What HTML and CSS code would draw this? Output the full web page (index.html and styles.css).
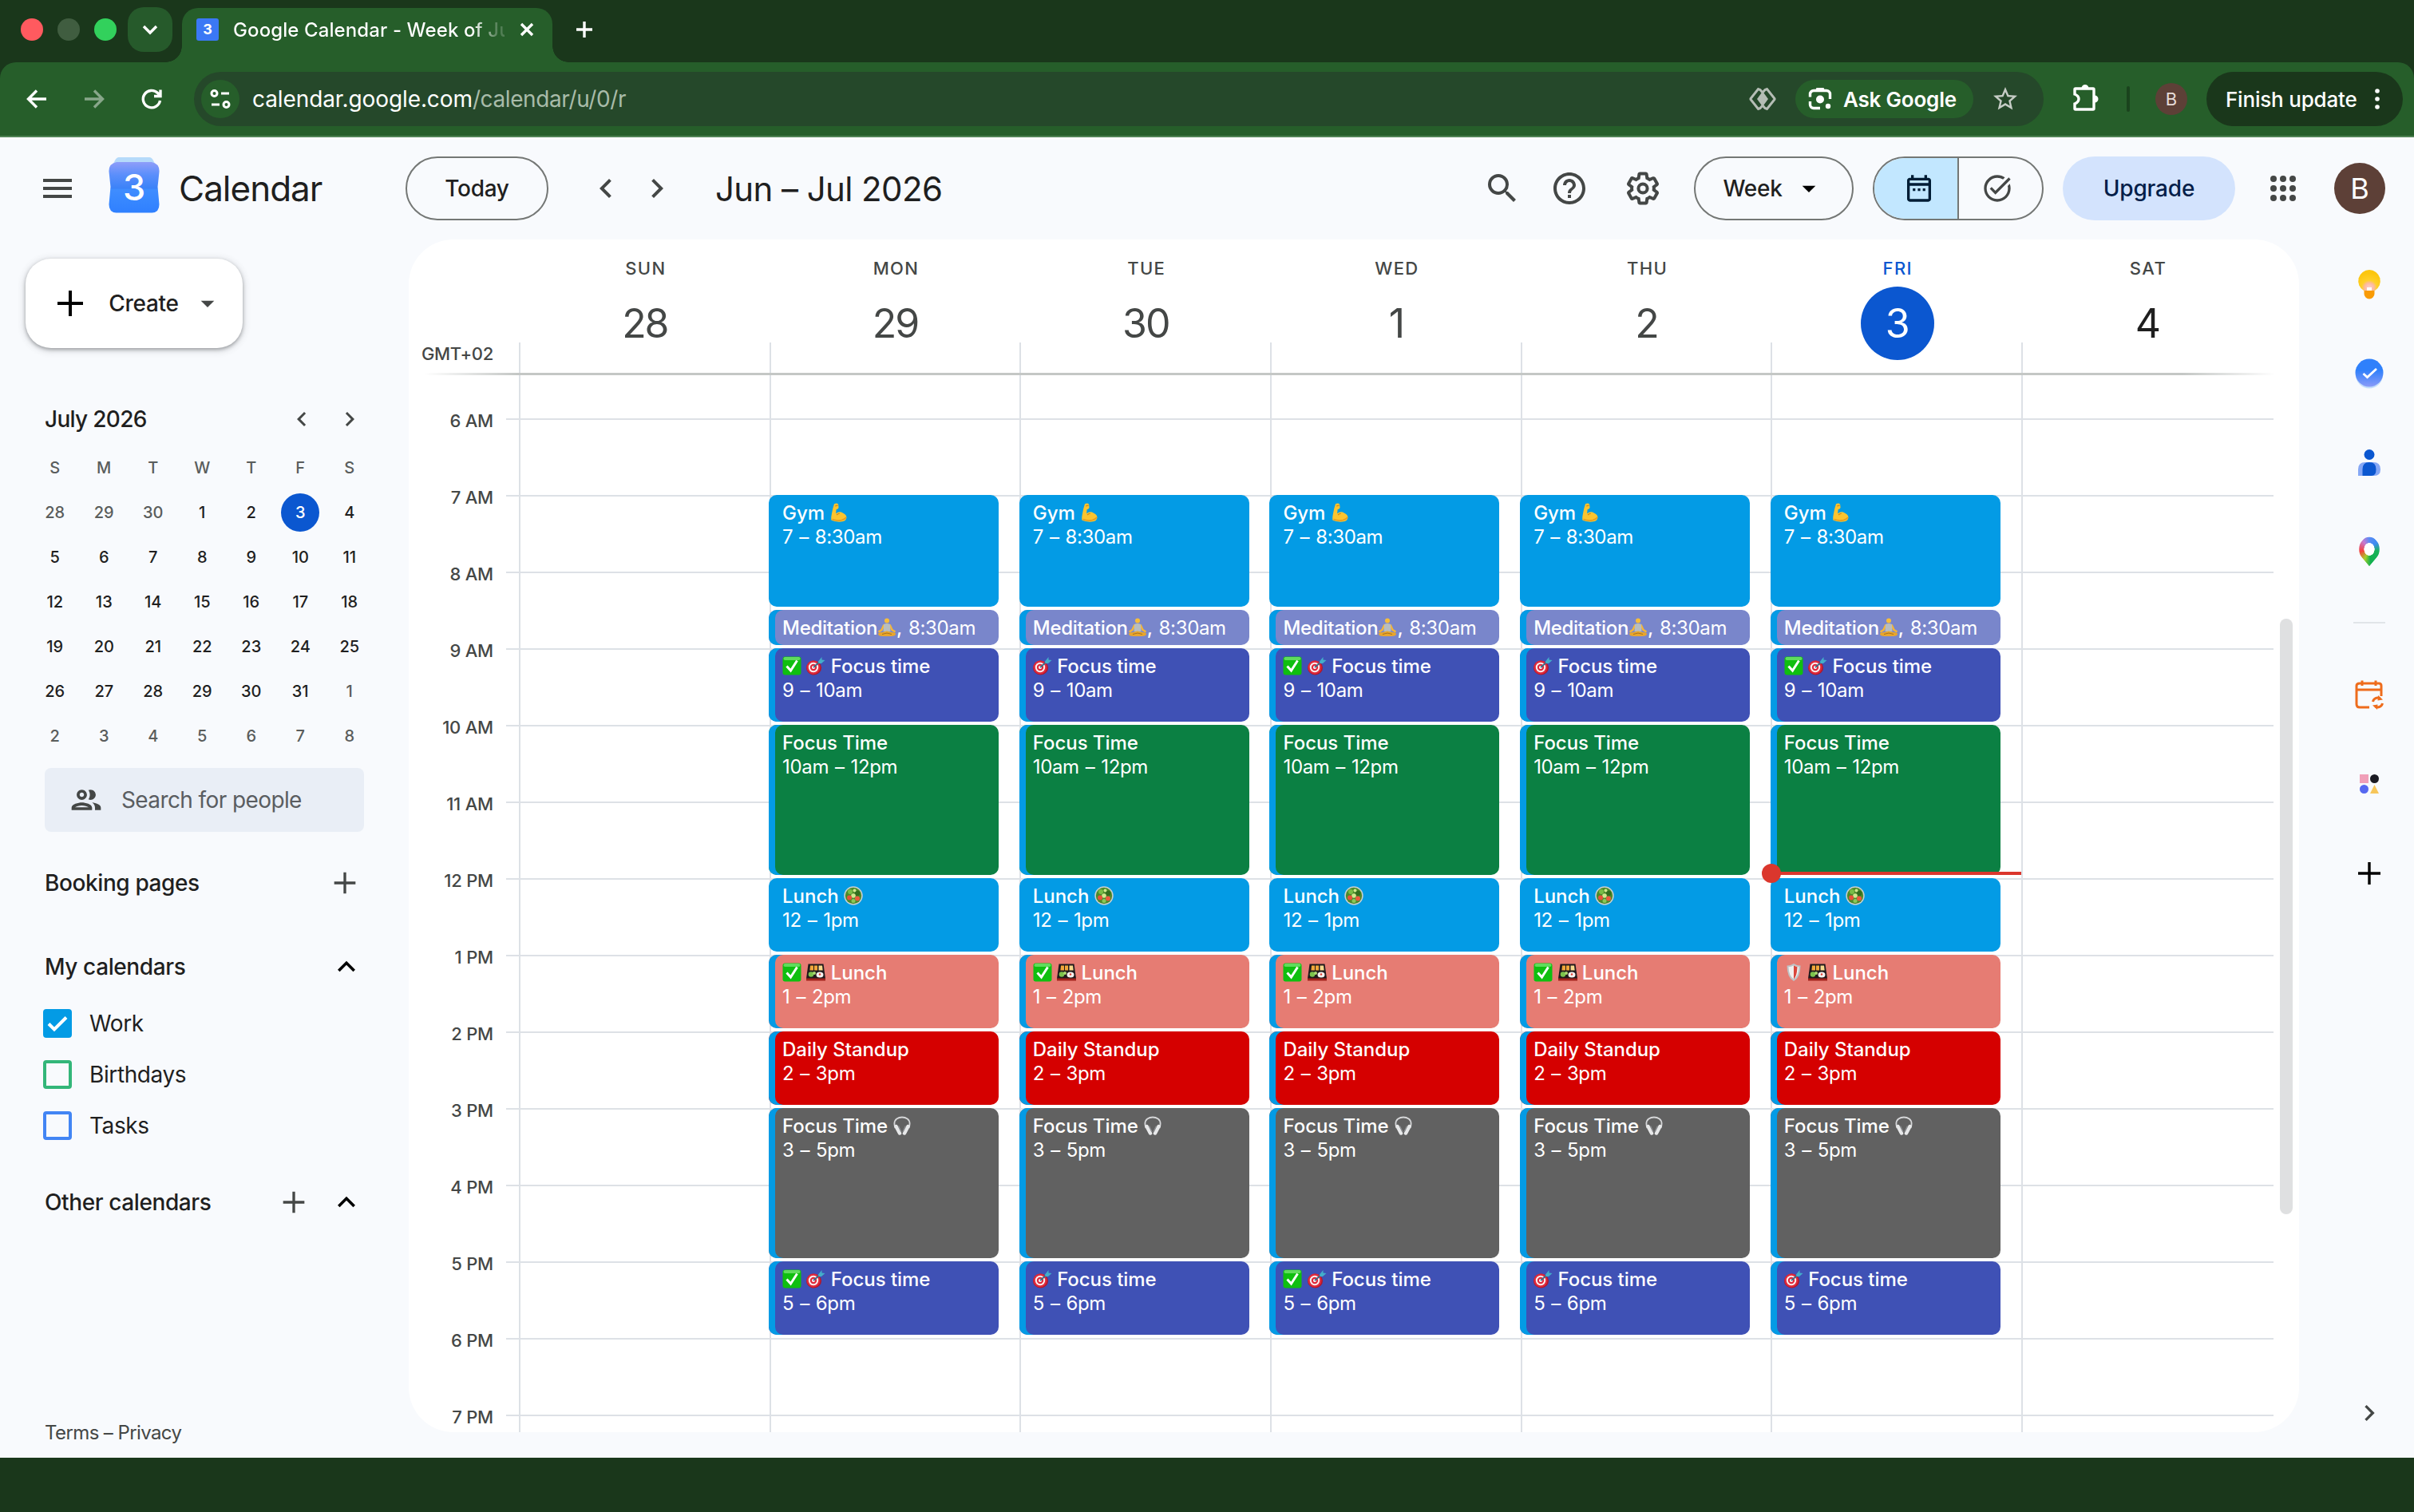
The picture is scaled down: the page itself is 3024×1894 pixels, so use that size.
FILE: index.html
```html
<!DOCTYPE html>
<html lang="en">
<head>
  <meta charset="UTF-8">
  <title>Google Calendar - Week of June 28, 2026</title>
  <link rel="stylesheet" href="styles.css">
</head>
<body>
  <svg class="sprite">
    <symbol id="i-left" viewBox="0 0 24 24"><path d="M15.41 7.41L14 6l-6 6 6 6 1.41-1.41L10.83 12z"/></symbol>
    <symbol id="i-right" viewBox="0 0 24 24"><path d="M10 6L8.59 7.41 13.17 12l-4.58 4.59L10 18l6-6z"/></symbol>
    <symbol id="i-up" viewBox="0 0 24 24"><path d="M12 8l-6 6 1.41 1.41L12 10.83l4.59 4.58L18 14z"/></symbol>
    <symbol id="i-plus" viewBox="0 0 24 24"><path d="M20 13h-7v7h-2v-7H4v-2h7V4h2v7h7v2z"/></symbol>
    <symbol id="i-drop" viewBox="0 0 24 24"><path d="M7 10l5 5 5-5z"/></symbol>

    <!-- event emoji -->
    <symbol id="e-check" viewBox="0 0 24 24"><rect x=".5" y=".5" width="23" height="23" rx="3" fill="#0fbf10"/><rect x="1.500" y="1" width="21" height="4" rx="2" fill="#5fdc5c"/><path d="M5.500 12.500l5 5.500L18.500 5.500" fill="none" stroke="#fff" stroke-width="3"/></symbol>
    <symbol id="e-target" viewBox="0 0 24 24"><ellipse cx="9.500" cy="14.500" rx="9.500" ry="9" fill="#b3162a"/><circle cx="9" cy="14" r="8.500" fill="#df2a3c"/><circle cx="9" cy="14" r="6.200" fill="#fbeff0"/><circle cx="9" cy="14" r="4.200" fill="#df2a3c"/><circle cx="9" cy="14" r="2" fill="#fff"/><path d="M9 14l9-8" stroke="#3a6b87" stroke-width="1.800"/><path fill="#43aeca" d="M15 6.500L19.500 1v3.500L23.500 5 19 9h-3.500z"/></symbol>
    <symbol id="e-salad" viewBox="0 0 24 24"><circle cx="12" cy="12" r="11.700" fill="#c9cfd0"/><circle cx="12" cy="12" r="10.200" fill="#4c8b2b"/><circle cx="8" cy="7" r="3" fill="#79bd46"/><circle cx="17" cy="9" r="3.300" fill="#336f1e"/><circle cx="12" cy="12" r="2.800" fill="#d3e88f"/><circle cx="17" cy="15.500" r="3" fill="#ec5a3d"/><circle cx="7" cy="14.500" r="3" fill="#e65339"/><circle cx="12" cy="18.500" r="2.500" fill="#8bc657"/><circle cx="13.500" cy="5.500" r="2" fill="#cfe78d"/></symbol>
    <symbol id="e-bento" viewBox="0 0 24 24"><path fill="#201a1c" d="M2.500 1.500h19L24 20H0z"/><path fill="#a3231c" d="M0 19.500h24v3H0z"/><path fill="#f2a73a" d="M5 3.500h4v6H4.400zM10 3.500h4v6h-4z"/><path fill="#f7d88b" d="M15.500 3.500H20l.7 6h-5.200z"/><circle cx="6" cy="14.500" r="3.300" fill="#7cc34c"/><circle cx="10" cy="13" r="2" fill="#a8da70"/><ellipse cx="17" cy="15" rx="4.500" ry="3.500" fill="#f4f1ee"/><circle cx="17" cy="14.500" r="1.200" fill="#de3a2f"/></symbol>
    <symbol id="e-shield" viewBox="0 0 24 24"><path fill="#bfc3c6" d="M12 1q5 3 8.500 2.500 0 15-8.500 19.500Q3.500 18.500 3.500 3.500 7 4 12 1z"/><path fill="#f2efee" d="M12 3.500q4 2 6.500 1.800Q18 17 12 20.500 6 17 5.500 5.300 8 5.500 12 3.500z"/><path fill="#d9463c" d="M12 3.500q3.500 1.800 4.500 1.800Q16 17 12 20.500z"/></symbol>
    <symbol id="e-phones" viewBox="0 0 24 24"><path d="M3.500 15C-1 2.500 10 1.500 12 1.500S25 2.500 20.500 15" fill="none" stroke="#d5d6d8" stroke-width="1.800"/><path d="M4.500 13l4.500 8.500M19.500 13L15 21.500" stroke="#e7e8e9" stroke-width="4.500" stroke-linecap="round"/><path d="M7.500 12.500l3.500 7.500M16.500 12.500L13 20" stroke="#8d8f92" stroke-width="1.500"/></symbol>
    <symbol id="e-yoga" viewBox="0 0 24 24"><circle cx="12" cy="3.600" r="3" fill="#f6bd3c"/><path d="M8.500 8.500L5.500 15l-4 2.500M15.500 8.500l3 6.500 4 2.500" fill="none" stroke="#f3b53a" stroke-width="2.600"/><path fill="#b8bec0" d="M8 8q4-2 8 0l.5 9h-9z"/><path fill="#e9a62c" d="M1 20q0-2 5-2l6-1.500 6 1.500q5 0 5 2 0 3-6 3H7q-6 0-6-3z"/><path d="M6 20.500l6-1.500 6 1.500" fill="none" stroke="#a9711d"/></symbol>
    <symbol id="e-arm" viewBox="0 0 24 28"><path fill="#fbc42f" d="M5 1.500q4-2 6 .5l.5 5q-1 2.500-3.500 2.500l-.5 6q5-4 10-1 5.500 2.500 5.500 6.500 0 6-8 6.500Q6 28 1 25.500q-1-3 .5-10Q3 7 5 1.500z"/><path d="M6.500 4.500l4-1M8.500 17.500q2-2 4.500-2" fill="none" stroke="#cf861c" stroke-width="1.300"/><path d="M2 24q7 2.500 14 1 5-1.500 6.500-4" fill="none" stroke="#e59a22" stroke-width="1.800"/></symbol>
  </svg>

  <div class="tabstrip">
    <span class="light red"></span>
    <span class="light grey"></span>
    <span class="light green"></span>
    <span class="tab-search">
      <svg width="22" height="14" viewBox="0 0 22 14"><path d="M3 3l8 8 8-8" class="line-white"/></svg>
    </span>
    <div class="tab">
      <span class="favicon">3</span>
      <span class="tab-title">Google Calendar - Week of Ju</span>
      <svg class="tab-close" width="18" height="18" viewBox="0 0 18 18"><path d="M2 2l14 14M16 2L2 16" class="line-white"/></svg>
    </div>
    <svg class="tab-new" width="22" height="22" viewBox="0 0 22 22"><path d="M11 1v20M1 11h20" class="line-white"/></svg>
  </div>

  <div class="toolbar">
    <svg class="nav" viewBox="0 0 28 28"><path d="M26 14H4M14 3.500L3.500 14 14 24.500" class="line-white"/></svg>
    <svg class="nav dim" viewBox="0 0 28 28"><path d="M2 14h22M14 3.500L24.500 14 14 24.500" class="line-white"/></svg>
    <svg class="nav" viewBox="0 0 28 28"><path d="M24.500 16A10.700 10.700 0 1 1 21.500 6.500L25 10M25 2.500V10.500H17" class="line-white"/></svg>
    <div class="omnibox">
      <span class="site-info">
        <svg width="26" height="26" viewBox="0 0 26 26"><g class="line-white thin"><circle cx="5.500" cy="6" r="3.500"/><path d="M14 6h10M2 20h10"/><circle cx="20.500" cy="20" r="3.500"/></g></svg>
      </span>
      <span class="url">calendar.google.com<span>/calendar/u/0/r</span></span>
      <svg class="ext" width="34" height="30" viewBox="0 0 34 30"><path d="M14 26.500l-2.500 1L2 15.500v-1l9.500-12L14 3.500l3 3.500 3-3.500 2.500-1L32 14.500v1l-9.500 12-2.500-1-3-3.500z"/><path class="fill" d="M17 5.500l7 9.500-7 9.500-7-9.500z"/></svg>
      <span class="ask">
        <svg width="32" height="32" viewBox="0 0 32 32"><path d="M3.500 13.500V10A4.500 4.500 0 0 1 8 5.500h16A4.500 4.500 0 0 1 28.500 10v6M3.500 19v4A4.500 4.500 0 0 0 8 27.500h8" class="line-white"/><path d="M11.500 2h9l1.500 3.500H10z"/><circle cx="16" cy="16.500" r="5"/><circle cx="26" cy="25" r="3.200"/></svg>
        Ask Google
      </span>
      <svg class="star" width="36" height="36" viewBox="0 0 24 24"><path d="M22 9.240l-7.190-.62L12 2 9.190 8.630 2 9.240l5.460 4.730L5.820 21 12 17.270 18.180 21l-1.630-7.030L22 9.240zM12 15.400l-3.760 2.270 1-4.280-3.320-2.880 4.380-.38L12 6.100l1.710 4.040 4.380.38-3.320 2.880 1 4.280L12 15.400z"/></svg>
    </div>
    <svg class="puzzle" width="36" height="36" viewBox="0 0 36 36"><path d="M6 6h22q1 0 1 1v24q0 1-1 1H6q-1 0-1-1v-6q5-2 5-6t-5-6V7q0-1 1-1z" class="line-white"/><path d="M13.500 5.500a4.500 4.500 0 0 1 9 0zM30 14.500a4.500 4.500 0 0 1 0 9z"/></svg>
    <span class="sep"></span>
    <span class="profile">B</span>
    <span class="finish">Finish update
      <svg width="8" height="28" viewBox="0 0 8 28"><circle cx="4" cy="4" r="2.800"/><circle cx="4" cy="14" r="2.800"/><circle cx="4" cy="24" r="2.800"/></svg>
    </span>
  </div>

  <div class="app">
    <header>
      <svg class="icon menu" viewBox="0 0 24 24"><path d="M3 18h18v-2H3v2zm0-5h18v-2H3v2zm0-7v2h18V6H3z"/></svg>
      <svg class="logo" width="66" height="72" viewBox="0 0 66 72">
        <defs>
          <linearGradient id="lg" x1="0" y1="0" x2="0" y2="1"><stop offset="0" stop-color="#8f9df9"/><stop offset=".25" stop-color="#5b8ffb"/><stop offset=".52" stop-color="#3b82f8"/><stop offset=".54" stop-color="#3f8dff"/><stop offset="1" stop-color="#2f80ff"/></linearGradient>
        </defs>
        <path fill="#b5dafa" d="M14 1h38q3 0 5 4l4 8H5l4-8q2-4 5-4z"/>
        <path fill="url(#lg)" d="M11 7h44q10 2 9.500 12L62.500 38l2 22q0 10-9 10.500H10.500q-9-.5-9-10.500l2-22L1.500 19Q1 9 11 7z"/>
        <text x="33" y="55" text-anchor="middle">3</text>
      </svg>
      <span class="brand">Calendar</span>
      <button class="pill today">Today</button>
      <svg class="icon prev"><use href="#i-left"/></svg>
      <svg class="icon next"><use href="#i-right"/></svg>
      <h1>Jun – Jul 2026</h1>
      <svg class="icon search" viewBox="0 0 24 24"><path d="M15.500 14h-.79l-.28-.27A6.471 6.471 0 0 0 16 9.500 6.500 6.500 0 1 0 9.500 16c1.610 0 3.090-.59 4.230-1.570l.27.28v.79l5 4.990L20.490 19l-4.990-5zm-6 0C7.010 14 5 11.990 5 9.500S7.010 5 9.500 5 14 7.010 14 9.500 11.990 14 9.500 14z"/></svg>
      <svg class="icon help" viewBox="0 0 24 24"><path d="M11 18h2v-2h-2v2zm1-16C6.480 2 2 6.480 2 12s4.480 10 10 10 10-4.480 10-10S17.520 2 12 2zm0 18c-4.410 0-8-3.590-8-8s3.590-8 8-8 8 3.590 8 8-3.590 8-8 8zm0-14c-2.210 0-4 1.790-4 4h2c0-1.100.9-2 2-2s2 .9 2 2c0 2-3 1.750-3 5h2c0-2.250 3-2.500 3-5 0-2.210-1.790-4-4-4z"/></svg>
      <svg class="icon gear" viewBox="0 0 24 24"><path d="M13.850 22.250h-3.700c-.74 0-1.360-.54-1.450-1.270l-.27-1.890c-.27-.14-.53-.29-.79-.46l-1.800.72c-.7.26-1.470-.03-1.810-.65L2.200 15.530c-.35-.66-.2-1.440.36-1.880l1.530-1.190c-.01-.15-.02-.3-.02-.46 0-.15.01-.31.02-.46l-1.520-1.190c-.59-.45-.74-1.260-.37-1.880l1.850-3.190c.34-.62 1.110-.9 1.790-.63l1.810.73c.26-.17.52-.32.78-.46l.27-1.910c.09-.7.71-1.250 1.440-1.250h3.700c.74 0 1.360.54 1.450 1.270l.27 1.890c.27.14.53.29.79.46l1.800-.72c.71-.26 1.480.03 1.820.65l1.840 3.180c.36.66.2 1.440-.36 1.880l-1.520 1.190c.01.15.02.3.02.46s-.01.31-.02.46l1.520 1.190c.56.45.72 1.230.37 1.860l-1.860 3.220c-.34.62-1.110.9-1.800.63l-1.800-.72c-.26.17-.52.32-.78.46l-.27 1.910c-.1.68-.72 1.220-1.460 1.220zm-3.230-2h2.760l.37-2.550.53-.22c.44-.18.88-.44 1.340-.78l.45-.34 2.380.96 1.380-2.400-2.030-1.580.07-.56c.03-.26.06-.51.06-.78s-.03-.53-.06-.78l-.07-.56 2.030-1.580-1.390-2.400-2.390.96-.45-.35c-.42-.32-.87-.58-1.330-.77l-.52-.22-.37-2.550h-2.760l-.37 2.550-.53.21c-.44.19-.88.44-1.340.79l-.45.33-2.380-.95-1.390 2.390 2.030 1.580-.07.56a7 7 0 0 0-.06.79c0 .26.02.53.06.78l.07.56-2.030 1.580 1.380 2.400 2.390-.96.45.35c.43.33.86.58 1.330.77l.53.22.38 2.550z"/><circle cx="12" cy="12" r="2.800"/></svg>
      <button class="pill week">Week <svg width="40" height="40"><use href="#i-drop"/></svg></button>
      <div class="pill switch">
        <span class="on"><svg width="40" height="40" viewBox="0 0 24 24"><path d="M19 4h-1V2h-2v2H8V2H6v2H5c-1.100 0-2 .9-2 2v14c0 1.100.9 2 2 2h14c1.100 0 2-.9 2-2V6c0-1.100-.9-2-2-2zm0 16H5V10h14v10zm0-12H5V6h14v2zM7.300 12h1.900v1.900H7.300zm3.750 0h1.900v1.900h-1.900zm3.750 0h1.900v1.900h-1.900z"/></svg></span>
        <span class="off"><svg width="40" height="40" viewBox="0 0 24 24"><path d="M22 5.180L10.590 16.600l-4.240-4.240 1.410-1.410 2.830 2.830 10-10L22 5.180zM19.790 10.220C19.920 10.790 20 11.390 20 12c0 4.420-3.580 8-8 8s-8-3.580-8-8 3.580-8 8-8c1.580 0 3.040.46 4.280 1.250l1.440-1.440C16.100 2.670 14.130 2 12 2 6.480 2 2 6.480 2 12s4.480 10 10 10 10-4.480 10-10c0-1.190-.22-2.330-.6-3.390l-1.610 1.610z"/></svg></span>
      </div>
      <button class="upgrade">Upgrade</button>
      <svg class="icon apps" viewBox="0 0 24 24"><circle cx="6" cy="6" r="2"/><circle cx="12" cy="6" r="2"/><circle cx="18" cy="6" r="2"/><circle cx="6" cy="12" r="2"/><circle cx="12" cy="12" r="2"/><circle cx="18" cy="12" r="2"/><circle cx="6" cy="18" r="2"/><circle cx="12" cy="18" r="2"/><circle cx="18" cy="18" r="2"/></svg>
      <span class="account">B</span>
    </header>

    <div class="content">
      <aside class="sidebar">
        <button class="create">
          <svg width="48" height="48"><use href="#i-plus"/></svg>
          <span>Create</span>
          <svg width="40" height="40"><use href="#i-drop"/></svg>
        </button>
        <div class="month-head">
          <span>July 2026</span>
          <svg><use href="#i-left"/></svg>
          <svg><use href="#i-right"/></svg>
        </div>
        <div class="month" id="month"></div>
        <div class="people">
          <svg width="44" height="44" viewBox="0 0 24 24"><path d="M9 13.750c-2.340 0-7 1.170-7 3.500V19h14v-1.750c0-2.330-4.660-3.500-7-3.500zM4.340 17c.84-.58 2.870-1.250 4.660-1.250s3.820.67 4.660 1.250H4.340zM9 12c1.930 0 3.500-1.570 3.500-3.500S10.930 5 9 5 5.500 6.570 5.500 8.500 7.070 12 9 12zm0-5c.83 0 1.500.67 1.500 1.500S9.830 10 9 10s-1.500-.67-1.500-1.500S8.170 7 9 7zm7.040 6.810c1.160.84 1.960 1.960 1.960 3.440V19h4v-1.750c0-2.020-3.500-3.170-5.960-3.440zM15 12c1.930 0 3.500-1.570 3.500-3.500S16.930 5 15 5c-.54 0-1.040.13-1.500.35.63.89 1 1.980 1 3.150s-.37 2.260-1 3.150c.46.22.96.35 1.500.35z"/></svg>
          <span>Search for people</span>
        </div>
        <div class="section booking"><span>Booking pages</span><svg class="add"><use href="#i-plus"/></svg></div>
        <div class="section mine"><span>My calendars</span><svg><use href="#i-up"/></svg></div>
        <label class="cal"><i class="box work"><svg width="28" height="28" viewBox="0 0 28 28"><path d="M3 14.500l7 7L25 6.500"/></svg></i>Work</label>
        <label class="cal"><i class="box birthdays"></i>Birthdays</label>
        <label class="cal"><i class="box tasks"></i>Tasks</label>
        <div class="section other"><span>Other calendars</span><svg class="add"><use href="#i-plus"/></svg><svg><use href="#i-up"/></svg></div>
        <div class="legal">Terms – Privacy</div>
      </aside>

      <main class="card">
        <div class="days-head">
          <div class="zone">GMT+02</div>
          <div class="day"><b>SUN</b><em>28</em></div>
          <div class="day"><b>MON</b><em>29</em></div>
          <div class="day"><b>TUE</b><em>30</em></div>
          <div class="day"><b>WED</b><em>1</em></div>
          <div class="day"><b>THU</b><em>2</em></div>
          <div class="day current"><b>FRI</b><em>3</em></div>
          <div class="day future"><b>SAT</b><em>4</em></div>
        </div>
        <div class="grid">
          <div class="hours" id="hours"></div>
          <div class="columns" id="columns"></div>
        </div>
        <div class="scrollbar"></div>
      </main>

      <nav class="rail">
        <svg viewBox="0 0 40 40"><defs><radialGradient id="kp" cx=".5" cy=".85" r=".7"><stop offset="0" stop-color="#ffd0c8"/><stop offset=".3" stop-color="#fdb9a0"/><stop offset=".5" stop-color="#ffd028"/><stop offset="1" stop-color="#fcc60e"/></radialGradient></defs><path fill="url(#kp)" d="M20 2a14 14 0 0 1 7 26H13A14 14 0 0 1 20 2z"/><path fill="#f99b05" d="M13.500 28h13v4a6 6 0 0 1-13 0z"/><path fill="#fff" d="M17 24h6v4h-6z"/></svg>
        <svg viewBox="0 0 40 40"><defs><linearGradient id="tk" x1="0" y1="0" x2="0" y2="1"><stop offset=".4" stop-color="#2f80fb"/><stop offset="1" stop-color="#8a9bf8"/></linearGradient></defs><circle cx="20" cy="21.500" r="17" fill="#c3dffb"/><circle cx="20" cy="19" r="17.500" fill="url(#tk)"/><path d="M12.500 20l5 4.500L29 14" stroke="#fff" stroke-width="2.800" fill="none"/></svg>
        <svg viewBox="0 0 40 40"><circle cx="20" cy="9.500" r="6.500" fill="#0b57d0"/><path fill="#85a7f5" d="M6 36v-8q0-9 9-9h10q9 0 9 9 0 8-8 8z"/><path fill="#0b57d0" d="M11.500 36v-8q0-9 8.500-9t8.500 9q0 8-6 8z"/></svg>
        <span class="rail-icon maps"><i></i></span>
        <hr>
        <svg class="sync" viewBox="0 0 40 40"><path d="M20 36H8q-4 0-4-4V9q0-3 4-3h24q3 0 3 3v13M4 14h31M11 2.500V9M28 2.500V9M24.500 29a6 6 0 0 1 9-4M36.500 31a6 6 0 0 1-9 4"/><path class="tip" d="M31 21l6 5.500-6.500 1zM30 39l-6-5.500 6.500-1z"/></svg>
        <svg viewBox="0 0 40 40"><path fill="#f09fb8" d="M8 8h11v11H8z"/><circle cx="26.500" cy="13.500" r="5.500" fill="#1b1b23"/><circle cx="13.500" cy="26.500" r="5.500" fill="#5668f0"/><path fill="#f7c65a" d="M26.500 21l5.500 11H21z"/></svg>
        <svg class="more" viewBox="0 0 40 40"><path d="M20 6v28M6 20h28"/></svg>
        <svg class="collapse"><use href="#i-right"/></svg>
      </nav>
    </div>
  </div>

  <script>
    // mini month
    const month = document.getElementById('month');
    'SMTWTFS'.split('').forEach(d => month.innerHTML += `<b>${d}</b>`);
    for (let i = -2; i <= 39; i++) {
      const n = i < 1 ? i + 30 : i > 31 ? i - 31 : i;
      const cls = i < 1 || i > 31 ? 'out' : i === 3 ? 'now' : '';
      month.innerHTML += `<span class="${cls}">${n}</span>`;
    }

    // hour labels
    const hours = document.getElementById('hours');
    for (let h = 6; h <= 19; h++) {
      hours.innerHTML += `<span>${h > 12 ? h - 12 : h} ${h < 12 ? 'AM' : 'PM'}</span>`;
    }

    // events run back to back from 7am to 6pm on work days
    const emoji = name => `<svg class="emoji"><use href="#e-${name}"/></svg>`;
    const done = emoji('check') + ' ';
    const shield = emoji('shield') + ' ';
    const week = [
      null,
      [done, done, done],
      ['', done, ''],
      [done, done, done],
      ['', done, ''],
      [done, shield, ''],
      null
    ];
    const event = (cls, size, title, time) =>
      `<div class="event ${cls}" style="height:${size * 96 - 4}px"><strong>${title}</strong>${size < 1 ? ' ' + time : `<span>${time}</span>`}</div>`;

    document.getElementById('columns').innerHTML = week.map((marks, i) => {
      if (!marks) return '<div class="column"></div>';
      return `<div class="column">` +
        event('sky', 1.5, 'Gym ' + emoji('arm'), '7 – 8:30am') +
        event('lavender', 0.5, 'Meditation' + emoji('yoga') + ',', '8:30am') +
        event('blueberry', 1, marks[0] + emoji('target') + ' Focus time', '9 – 10am') +
        event('basil', 2, 'Focus Time', '10am – 12pm') +
        event('sky', 1, 'Lunch ' + emoji('salad'), '12 – 1pm') +
        event('flamingo', 1, marks[1] + emoji('bento') + ' Lunch', '1 – 2pm') +
        event('tomato', 1, 'Daily Standup', '2 – 3pm') +
        event('graphite', 2, 'Focus Time ' + emoji('phones'), '3 – 5pm') +
        event('blueberry', 1, marks[2] + emoji('target') + ' Focus time', '5 – 6pm') +
        (i === 5 ? '<div class="now-line"></div>' : '') +
        `</div>`;
    }).join('');
  </script>
</body>
</html>
```
FILE: styles.css
```css
* {
  box-sizing: border-box;
}
body {
  margin: 0;
  width: 3024px;
  height: 1894px;
  overflow: hidden;
  display: flex;
  flex-direction: column;
  background: #1a371b;
  color: #1f1f1f;
  font-family: Inter, sans-serif;
  font-size: 28px;
}
svg {
  flex: none;
  display: block;
}
.sprite {
  position: absolute;
  width: 0;
  height: 0;
}
button {
  font: inherit;
  color: inherit;
  background: none;
  border: none;
  padding: 0;
}
.line-white {
  fill: none;
  stroke: #fff;
  stroke-width: 3.4;
}
.thin {
  stroke-width: 3;
}

/* browser */
.tabstrip {
  height: 78px;
  display: flex;
  align-items: center;
  padding: 0 0 4px 26px;
}
.light {
  width: 28px;
  height: 28px;
  border-radius: 50%;
  margin-right: 18px;
}
.red { background: #ff5a5f; }
.grey { background: #405d40; }
.green { background: #32d15c; }
.tab-search {
  width: 56px;
  height: 56px;
  border-radius: 20px;
  background: #265a2b;
  display: flex;
  align-items: center;
  justify-content: center;
  margin-left: -4px;
}
.tab {
  position: relative;
  top: 7px;
  width: 464px;
  height: 68px;
  margin-left: 12px;
  padding: 0 23px 14px 18px;
  border-radius: 20px 20px 0 0;
  background: #265e2a;
  display: flex;
  align-items: center;
}
.tab::before,
.tab::after {
  content: "";
  position: absolute;
  bottom: 0;
  width: 20px;
  height: 20px;
}
.tab::before {
  left: -20px;
  background: radial-gradient(circle at 0 0, transparent 19.5px, #265e2a 20px);
}
.tab::after {
  right: -20px;
  background: radial-gradient(circle at 100% 0, transparent 19.5px, #265e2a 20px);
}
.favicon {
  width: 28px;
  height: 28px;
  border-radius: 3px;
  background: #3b78f5;
  color: #fff;
  font-size: 18px;
  font-weight: 700;
  line-height: 28px;
  text-align: center;
}
.tab-title {
  width: 340px;
  margin: 0 19px 0 18px;
  font-size: 24px;
  font-weight: 500;
  letter-spacing: .1px;
  white-space: nowrap;
  color: transparent;
  background: linear-gradient(90deg, #fff 300px, #fff3 332px);
  background-clip: text;
}
.tab-new {
  margin-left: 29px;
}
.toolbar {
  height: 94px;
  background: #265e2a;
  border-radius: 20px 20px 0 0;
  border-bottom: 2px solid #4f8253;
  display: flex;
  align-items: center;
  padding: 0 14px 0 32px;
}
.nav {
  width: 28px;
  height: 28px;
  margin-right: 44px;
}
.nav.dim { opacity: .45; }
.omnibox {
  width: 2317px;
  height: 68px;
  margin-left: -5px;
  padding-left: 9px;
  border-radius: 34px;
  background: #25482a;
  display: flex;
  align-items: center;
  color: #fff;
}
.site-info {
  width: 48px;
  height: 48px;
  border-radius: 50%;
  background: #265e2a;
  display: flex;
  align-items: center;
  justify-content: center;
}
.url {
  margin-left: 16px;
  flex: 1;
  font-size: 28px;
  letter-spacing: -.1px;
}
.url span {
  color: #a8bba9;
  letter-spacing: -.4px;
}
.ext {
  fill: none;
  stroke: #b5bdb5;
  stroke-width: 3;
  margin-right: 24px;
}
.ext .fill {
  fill: #b5bdb5;
  stroke: none;
}
.ask {
  width: 223px;
  height: 48px;
  border-radius: 24px;
  background: #265e2a;
  display: flex;
  align-items: center;
  gap: 13px;
  padding-left: 15px;
  font-size: 26px;
  font-weight: 600;
  letter-spacing: -.2px;
  white-space: nowrap;
  fill: #fff;
}
.star {
  fill: #c6cdc6;
  margin: 0 30px 0 22px;
}
.puzzle {
  margin: -2px 0 0 34px;
  fill: #fff;
}
.sep {
  width: 4px;
  height: 32px;
  border-radius: 2px;
  background: #1a431d;
  margin: 0 32px 0 34px;
}
.profile {
  width: 40px;
  height: 40px;
  border-radius: 50%;
  background: #5d4037;
  color: #e6dcd9;
  font-size: 22px;
  line-height: 40px;
  text-align: center;
}
.finish {
  width: 246px;
  height: 68px;
  margin-left: auto;
  border-radius: 34px;
  background: #1a371b;
  color: #fff;
  fill: #fff;
  display: flex;
  align-items: center;
  justify-content: space-between;
  padding: 0 28px 0 24px;
  font-size: 26px;
  font-weight: 500;
  letter-spacing: -.2px;
  white-space: nowrap;
}

/* app header */
.app {
  height: 1654px;
  background: #f8fafd;
}
header {
  height: 128px;
  display: flex;
  align-items: center;
}
.icon {
  width: 48px;
  height: 48px;
  fill: #444746;
}
.menu { margin-left: 48px; }
.logo {
  margin: -8px 23px 0 39px;
}
.logo text {
  font-size: 45px;
  font-weight: 500;
  fill: #fff;
}
.brand {
  width: 284px;
  font-size: 44px;
  letter-spacing: -1px;
}
.pill {
  height: 80px;
  border: 2px solid #747775;
  border-radius: 40px;
  display: flex;
  align-items: center;
  justify-content: center;
  font-weight: 500;
  letter-spacing: -.3px;
}
.today { width: 179px; }
.prev { margin-left: 48px; }
.next { margin-left: 16px; }
h1 {
  width: 962px;
  margin: 0 0 0 49px;
  font-size: 42px;
  font-weight: 400;
  letter-spacing: -.6px;
}
.help { margin-left: 36px; }
.gear { margin-left: 44px; }
.gear circle {
  fill: none;
  stroke: #444746;
  stroke-width: 2;
}
.week {
  width: 200px;
  margin-left: 40px;
  gap: 13px;
}
.switch {
  width: 214px;
  margin-left: 24px;
  overflow: hidden;
  fill: #444746;
}
.switch span {
  flex: 1;
  height: 100%;
  display: flex;
  align-items: center;
  justify-content: center;
}
.switch .on {
  background: #c2e7ff;
  fill: #001d35;
  border-right: 2px solid #747775;
  padding-left: 8px;
}
.switch .off { padding-right: 8px; }
.upgrade {
  width: 216px;
  height: 80px;
  margin-left: 24px;
  border-radius: 40px;
  background: #d3e3fd;
  color: #041e49;
  font-weight: 500;
  letter-spacing: -.2px;
}
.apps { margin-left: 36px; }
.account {
  width: 64px;
  height: 64px;
  margin-left: 40px;
  border-radius: 50%;
  background: #5d4037;
  color: #fff;
  font-size: 36px;
  line-height: 64px;
  text-align: center;
}

/* sidebar */
.content {
  height: 1526px;
  display: flex;
}
.sidebar {
  width: 512px;
  padding: 24px 56px 0;
  display: flex;
  flex-direction: column;
}
.create {
  width: 272px;
  height: 112px;
  margin-left: -24px;
  border-radius: 32px;
  background: #fff;
  box-shadow: 0 2px 4px rgba(60, 64, 67, .4), 0 2px 8px 2px rgba(60, 64, 67, .16);
  display: flex;
  align-items: center;
  padding-left: 32px;
  font-weight: 500;
  letter-spacing: -.3px;
}
.create span {
  width: 88px;
  margin: 0 16px 0 24px;
}
.create svg:last-child { fill: #444746; }
.month-head {
  height: 48px;
  margin-top: 65px;
  display: flex;
  align-items: center;
  font-weight: 500;
  letter-spacing: -.7px;
}
.month-head span { flex: 1; }
.month-head svg {
  width: 36px;
  height: 36px;
  margin-right: 24px;
  fill: #444746;
}
.month-head svg:last-child { margin-right: 0; }
.month {
  display: grid;
  grid-template-columns: repeat(7, 61.5px);
  margin: 9px 0 0 -18px;
  font-size: 20px;
}
.month > * {
  height: 56px;
  display: flex;
  align-items: center;
  justify-content: center;
  font-weight: 500;
}
.month b,
.month .out { color: #5a5d5c; }
.month .now {
  width: 48px;
  height: 48px;
  margin: 4px auto;
  border-radius: 50%;
  background: #0b57d0;
  color: #fff;
}
.people {
  height: 80px;
  margin-top: 12px;
  border-radius: 8px;
  background: #e9eef6;
  display: flex;
  align-items: center;
  padding-left: 30px;
  color: #5a5d61;
  fill: #444746;
}
.people span {
  margin-left: 22px;
  letter-spacing: -.6px;
}
.section {
  height: 48px;
  display: flex;
  align-items: center;
  font-weight: 500;
  letter-spacing: -.4px;
}
.section span { flex: 1; }
.section svg {
  width: 44px;
  height: 44px;
}
.section .add {
  width: 40px;
  height: 40px;
  fill: #444746;
  margin-right: 24px;
}
.section .add:last-child { margin-right: 4px; }
.booking { margin-top: 40px; }
.mine {
  margin: 57px 0 15px;
}
.cal {
  height: 64px;
  display: flex;
  align-items: center;
  letter-spacing: -.4px;
}
.box {
  width: 36px;
  height: 36px;
  margin: 0 22px 0 -2px;
  border: 4px solid;
  border-radius: 4px;
}
.work {
  border-color: #039be5;
  background: #039be5;
}
.work path {
  fill: none;
  stroke: #fff;
  stroke-width: 4;
}
.birthdays { border-color: #33b679; }
.tasks { border-color: #4285f4; }
.other { margin-top: 40px; }
.legal {
  margin-top: auto;
  padding-bottom: 17px;
  font-size: 24px;
  letter-spacing: -.6px;
  color: #444746;
}

/* week view */
.card {
  position: relative;
  width: 2368px;
  height: 1494px;
  border-radius: 56px;
  background: #fff;
  overflow: hidden;
}
.days-head {
  position: relative;
  height: 170px;
  display: flex;
}
.days-head::after {
  content: "";
  position: absolute;
  left: 20px;
  right: 30px;
  bottom: 0;
  height: 3px;
  background: linear-gradient(90deg, transparent, #c4c7c5 5%, #c4c7c5 95%, transparent);
}
.zone {
  width: 138px;
  padding: 130px 32px 0 0;
  font-size: 22px;
  font-weight: 500;
  letter-spacing: -.3px;
  text-align: right;
  color: #444746;
}
.day {
  width: 313.7px;
  padding-left: 4px;
  display: flex;
  flex-direction: column;
  align-items: center;
  color: #444746;
  background: linear-gradient(#dde1e6, #dde1e6) left bottom / 2px 41px no-repeat;
}
.day b {
  margin-top: 22px;
  height: 28px;
  line-height: 28px;
  font-size: 22px;
  font-weight: 500;
  letter-spacing: 1.4px;
}
.day em {
  width: 92px;
  height: 92px;
  margin-top: 9px;
  border-radius: 50%;
  font-style: normal;
  font-size: 50px;
  line-height: 92px;
  letter-spacing: -2px;
  text-indent: -2px;
  text-align: center;
}
.current b { color: #0b57d0; }
.current em {
  background: #0b57d0;
  color: #fff;
}
.future em { color: #1f1f1f; }
.grid {
  height: 1324px;
  display: flex;
  background: repeating-linear-gradient(#dde1e6 0 2px, transparent 2px 96px) 122px 54px / 2214px 1400px no-repeat;
}
.hours {
  width: 138px;
  padding: 8px 32px 0 0;
  text-align: right;
  font-size: 22px;
  font-weight: 500;
  letter-spacing: -.2px;
  color: #444746;
}
.hours span {
  display: block;
  height: 96px;
  line-height: 98px;
}
.columns { display: flex; }
.column {
  position: relative;
  width: 313.7px;
  border-left: 2px solid #dde1e6;
  padding-top: 150px;
  display: flex;
  flex-direction: column;
  gap: 4px;
}
.event {
  flex: none;
  width: 288px;
  margin-left: -2.6px;
  padding: 8px 0 0 17px;
  border-radius: 10px;
  color: #fff;
  font-size: 24px;
  line-height: 30px;
  letter-spacing: -.35px;
  word-spacing: 1.5px;
  white-space: nowrap;
  overflow: hidden;
}
.event strong {
  font-weight: 500;
  letter-spacing: -.05px;
  word-spacing: 0;
}
.event span { display: block; }
.event:not(.sky) { box-shadow: inset 8px 0 #039be5; }
.emoji {
  display: inline-block;
  width: 24px;
  height: 24px;
  vertical-align: -3px;
}
.sky { background: #039be5; }
.lavender { background: #7986cb; }
.lavender strong { letter-spacing: -.3px; }
.blueberry { background: #3f51b5; }
.basil { background: #0b8043; }
.flamingo { background: #e67c73; }
.tomato { background: #d50000; }
.graphite { background: #616161; }
.now-line {
  position: absolute;
  left: 0;
  right: 0;
  top: 622px;
  height: 4px;
  background: #db372d;
}
.now-line::before {
  content: "";
  position: absolute;
  left: -13px;
  top: -10px;
  width: 24px;
  height: 24px;
  border-radius: 50%;
  background: #db372d;
}
.scrollbar {
  position: absolute;
  right: 8px;
  top: 475px;
  width: 16px;
  height: 746px;
  border-radius: 8px;
  background: #dfe0e1;
}

/* side rail */
.rail {
  flex: 1;
  padding: 36px 0 0 32px;
  display: flex;
  flex-direction: column;
  align-items: center;
}
.rail svg,
.rail-icon {
  width: 40px;
  height: 40px;
  margin-bottom: 72px;
}
.rail-icon {
  display: flex;
  align-items: center;
  justify-content: center;
}
.maps i {
  width: 28px;
  height: 28px;
  border-radius: 50% 50% 0 50%;
  transform: translateY(-4px) rotate(45deg) skew(5deg, 5deg);
  background: radial-gradient(circle, #fff 7px, transparent 7.5px), conic-gradient(from -45deg, #5a8bf5, #3d8bf0 15%, #19b35a 28%, #12b04f 48%, #a5d02a 58%, #f5403e 72%, #c77ad0 88%, #5a8bf5);
}
.rail hr {
  width: 40px;
  margin: -5px 0 69px;
  border: none;
  border-top: 2px solid #e1e5e9;
}
.sync {
  fill: none;
  stroke: #ee6c1c;
  stroke-width: 3;
}
.sync .tip {
  fill: #ee6c1c;
  stroke: none;
}
.more {
  stroke: #000;
  stroke-width: 3.4;
}
.rail .collapse {
  margin: auto 0 36px;
  fill: #444746;
}
```
